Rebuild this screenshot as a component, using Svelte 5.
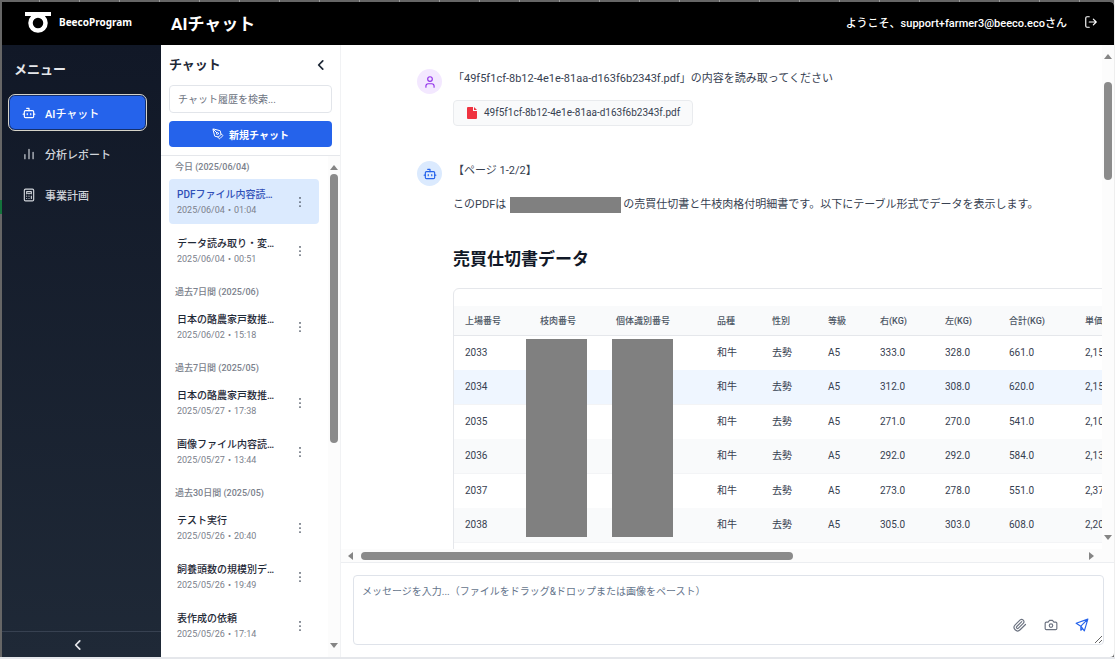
<script lang="ts">
	interface Chat {
		title: string;
		date: string;
		active?: boolean;
	}

	interface Group {
		label: string;
		chats: Chat[];
	}

	const menu = [
		{ label: 'AIチャット', icon: 'bot', active: true },
		{ label: '分析レポート', icon: 'chart', active: false },
		{ label: '事業計画', icon: 'calc', active: false }
	];

	const groups: Group[] = [
		{
			label: '今日 (2025/06/04)',
			chats: [
				{ title: 'PDFファイル内容読…', date: '2025/06/04・01:04', active: true },
				{ title: 'データ読み取り・変…', date: '2025/06/04・00:51' }
			]
		},
		{
			label: '過去7日間 (2025/06)',
			chats: [{ title: '日本の酪農家戸数推…', date: '2025/06/02・15:18' }]
		},
		{
			label: '過去7日間 (2025/05)',
			chats: [
				{ title: '日本の酪農家戸数推…', date: '2025/05/27・17:38' },
				{ title: '画像ファイル内容読…', date: '2025/05/27・13:44' }
			]
		},
		{
			label: '過去30日間 (2025/05)',
			chats: [
				{ title: 'テスト実行', date: '2025/05/26・20:40' },
				{ title: '飼養頭数の規模別デ…', date: '2025/05/26・19:49' },
				{ title: '表作成の依頼', date: '2025/05/26・17:14' }
			]
		}
	];

	const columns = [
		{ label: '上場番号', width: 75 },
		{ label: '枝肉番号', width: 76 },
		{ label: '個体識別番号', width: 101 },
		{ label: '品種', width: 55 },
		{ label: '性別', width: 56 },
		{ label: '等級', width: 52 },
		{ label: '右(KG)', width: 65 },
		{ label: '左(KG)', width: 64 },
		{ label: '合計(KG)', width: 76 },
		{ label: '単価', width: 70 }
	];

	const rows = [
		['2033', '', '', '和牛', '去勢', 'A5', '333.0', '328.0', '661.0', '2,151'],
		['2034', '', '', '和牛', '去勢', 'A5', '312.0', '308.0', '620.0', '2,151'],
		['2035', '', '', '和牛', '去勢', 'A5', '271.0', '270.0', '541.0', '2,100'],
		['2036', '', '', '和牛', '去勢', 'A5', '292.0', '292.0', '584.0', '2,130'],
		['2037', '', '', '和牛', '去勢', 'A5', '273.0', '278.0', '551.0', '2,370'],
		['2038', '', '', '和牛', '去勢', 'A5', '305.0', '303.0', '608.0', '2,200']
	];

	const fileName = '49f5f1cf-8b12-4e1e-81aa-d163f6b2343f.pdf';

	let search = $state('');
	let message = $state('');
</script>

{#snippet icon(name: string, size: number)}
	<svg
		width={size}
		height={size}
		viewBox="0 0 24 24"
		fill="none"
		stroke="currentColor"
		stroke-width="2"
		stroke-linecap="round"
		stroke-linejoin="round"
		aria-hidden="true"
	>
		{#if name === 'bot'}
			<path d="M12 8V4H8" />
			<rect x="4" y="8" width="16" height="12" rx="2" />
			<path d="M2 14h2M20 14h2M15 13v2M9 13v2" />
		{:else if name === 'chart'}
			<path d="M5 20v-7M12 20V4M19 20V9" />
		{:else if name === 'calc'}
			<rect x="4" y="2" width="16" height="20" rx="2" />
			<path d="M8 6h8v3H8zM16 14v4M16 10h.01M12 10h.01M8 10h.01M12 14h.01M8 14h.01M12 18h.01M8 18h.01" />
		{:else if name === 'left'}
			<path d="M15 19l-7-7 7-7" stroke-width="3" />
		{:else if name === 'logout'}
			<path d="M9 3H5a2 2 0 0 0-2 2v14a2 2 0 0 0 2 2h4M16 17l5-5-5-5M21 12H9" />
		{:else if name === 'pen'}
			<path d="M15.7 21.3a1 1 0 0 1-1.4 0l-1.6-1.6a1 1 0 0 1 0-1.4l5.6-5.6a1 1 0 0 1 1.4 0l1.6 1.6a1 1 0 0 1 0 1.4z" />
			<path d="M18 13l-1.4-6.9a1 1 0 0 0-.7-.8L3.2 2a1 1 0 0 0-1.2 1.2l3.3 12.7a1 1 0 0 0 .8.7L13 18M2.3 2.3l7.3 7.3" />
			<circle cx="11" cy="11" r="2" />
		{:else if name === 'user'}
			<path d="M19 21v-2a4 4 0 0 0-4-4H9a4 4 0 0 0-4 4v2" />
			<circle cx="12" cy="7" r="4" />
		{:else if name === 'dots'}
			<path d="M12 5h.01M12 12h.01M12 19h.01" stroke-width="3" />
		{:else if name === 'clip'}
			<path d="M21.4 11.1l-9.2 9.1a6 6 0 0 1-8.5-8.5l8.6-8.5a4 4 0 0 1 5.6 5.6l-8.6 8.6a2 2 0 0 1-2.8-2.9l8.5-8.4" />
		{:else if name === 'camera'}
			<path d="M14.5 4h-5L7 7H4a2 2 0 0 0-2 2v9a2 2 0 0 0 2 2h16a2 2 0 0 0 2-2V9a2 2 0 0 0-2-2h-3z" />
			<circle cx="12" cy="13" r="3" />
		{:else if name === 'send'}
			<path d="M22 2L2 9l8 5 6 8zM22 2L10 14M10 14v7l3-3" />
		{/if}
	</svg>
{/snippet}

{#snippet scrollbar(dir: string, start: number, size: number)}
	<div class="scrollbar {dir}" aria-hidden="true">
		<svg width="10" height="8" viewBox="0 0 10 8"><path d="M1 7l4-5 4 5z" /></svg>
		<div class="track">
			<div style:flex="{start} 0 0px"></div>
			<div class="thumb" style:flex="{size} 0 0px"></div>
			<div style:flex="{100 - start - size} 0 0px"></div>
		</div>
		<svg width="10" height="8" viewBox="0 0 10 8"><path d="M1 1h8L5 6z" /></svg>
	</div>
{/snippet}

<div class="frame">
	<div class="app">
		<header>
			<div class="brand">
				<svg width="28" height="22" viewBox="0 0 28 22" aria-hidden="true">
					<path d="M1 1h26v4H1z" fill="#fff" />
					<circle cx="14" cy="12" r="7.5" fill="none" stroke="#fff" stroke-width="4.500" />
				</svg>
				<span>BeecoProgram</span>
			</div>
			<h1>AIチャット</h1>
			<span class="welcome">ようこそ、support+farmer3@beeco.ecoさん</span>
			<button class="logout" aria-label="ログアウト">{@render icon('logout', 14)}</button>
		</header>

		<div class="body">
			<aside class="sidebar">
				<h2>メニュー</h2>
				<nav>
					{#each menu as item}
						<a href="#{item.icon}" class:active={item.active}>
							{@render icon(item.icon, 14)}
							<span>{item.label}</span>
						</a>
					{/each}
				</nav>
				<button class="collapse" aria-label="メニューを閉じる">{@render icon('left', 14)}</button>
			</aside>

			<section class="history">
				<div class="history-top">
					<div class="title-row">
						<h2>チャット</h2>
						<button aria-label="履歴を閉じる">{@render icon('left', 14)}</button>
					</div>
					<input type="text" bind:value={search} placeholder="チャット履歴を検索..." aria-label="チャット履歴を検索" />
					<button class="new-chat">{@render icon('pen', 12)}新規チャット</button>
				</div>
				<div class="history-list">
					<div class="groups">
						{#each groups as group}
							<div class="group">
								<h3>{group.label}</h3>
								{#each group.chats as chat}
									<div class="chat" class:active={chat.active}>
										<div class="info">
											<div class="name">{chat.title}</div>
											<div class="date">{chat.date}</div>
										</div>
										<button aria-label="操作">{@render icon('dots', 14)}</button>
									</div>
								{/each}
							</div>
						{/each}
					</div>
					{@render scrollbar('vertical', 0, 58)}
				</div>
			</section>

			<main>
				<div class="log-row">
					<div class="log">
						<div class="message">
							<div class="avatar user">{@render icon('user', 14)}</div>
							<div class="content">
								<p>「{fileName}」の内容を読み取ってください</p>
								<a class="file" href="#file">
									<svg width="12" height="14" viewBox="0 0 12 14" aria-hidden="true">
										<path d="M2 1h5v4h4v7a1 1 0 0 1-1 1H2a1 1 0 0 1-1-1V2a1 1 0 0 1 1-1z" fill="#ef3340" />
										<path d="M8 1l3 3H8z" fill="#ef3340" />
									</svg>
									<span>{fileName}</span>
								</a>
							</div>
						</div>

						<div class="message">
							<div class="avatar bot">{@render icon('bot', 14)}</div>
							<div class="content">
								<p>【ページ 1-2/2】</p>
								<p class="intro">このPDFは<span class="redacted"></span>の売買仕切書と牛枝肉格付明細書です。以下にテーブル形式でデータを表示します。</p>
								<h2>売買仕切書データ</h2>
								<div class="table-box">
									<table>
										<colgroup>
											{#each columns as col}
												<col style:width="{col.width}px" />
											{/each}
										</colgroup>
										<thead>
											<tr>
												{#each columns as col}
													<th>{col.label}</th>
												{/each}
											</tr>
										</thead>
										<tbody>
											{#each rows as row, i}
												<tr class:hover={i === 1}>
													{#each row as cell}
														<td>{cell}</td>
													{/each}
												</tr>
											{/each}
										</tbody>
									</table>
									<div class="mask carcass"></div>
									<div class="mask individual"></div>
								</div>
							</div>
						</div>
					</div>
					{@render scrollbar('vertical', 4, 21)}
				</div>
				{@render scrollbar('horizontal', 0, 60)}
				<form class="composer">
					<div class="box">
						<textarea
							bind:value={message}
							placeholder="メッセージを入力...（ファイルをドラッグ&ドロップまたは画像をペースト）"
							aria-label="メッセージ"
						></textarea>
						<div class="actions">
							<button type="button" aria-label="ファイルを添付">{@render icon('clip', 14)}</button>
							<button type="button" aria-label="画像を撮影">{@render icon('camera', 14)}</button>
							<button type="button" class="send" aria-label="送信">{@render icon('send', 14)}</button>
						</div>
					</div>
				</form>
			</main>
		</div>
	</div>
</div>

<style>
	:global(body) { background: #fff; }
	* { box-sizing: border-box; }
	h1, h2, h3, p { margin: 0; }
	svg { display: block; flex: none; }
	button { font: inherit; color: inherit; background: none; border: 0; padding: 0; cursor: pointer; }

	.frame {
		height: 100vh;
		padding: 2px 1px 2px 2px;
		background:
			linear-gradient(#e5e7eb, #e5e7eb) bottom / 100% 2px no-repeat,
			linear-gradient(#eee, #eee) right / 1px 100% no-repeat,
			linear-gradient(#14733c, #14733c) 0 200px / 2px 14px no-repeat,
			repeating-linear-gradient(90deg, #666 0 39px, #999 39px 40px);
		font-family: Roboto, "Noto Sans CJK JP", sans-serif;
		color: #374151;
	}
	.app { height: 100%; display: flex; flex-direction: column; background: #fff; border-radius: 0 4px 4px 0; overflow: hidden; }

	header { flex: none; height: 43px; display: flex; align-items: center; padding: 0 16px 3px 22px; background: #000; color: #fff; }
	.brand { display: flex; align-items: center; gap: 7px; width: 147px; font: 700 10px "Noto Sans", sans-serif; }
	h1 { flex: 1; font-size: 17px; font-weight: 700; }
	.welcome { font-size: 11px; font-weight: 500; }
	.logout { margin-left: 17px; }

	.body { flex: 1; min-height: 0; display: flex; }

	.sidebar { flex: none; width: 159px; display: flex; flex-direction: column; background: linear-gradient(#111827, #1f2937); color: #e5e7eb; }
	.sidebar h2 { padding: 15px 12px 0; font-size: 13px; line-height: 20px; }
	nav { flex: 1; display: flex; flex-direction: column; gap: 6px; padding: 15px 15px 0 7px; }
	nav a { display: flex; align-items: center; gap: 9px; height: 35px; padding: 0 13px; border-radius: 6px; color: #d1d5db; font-size: 11px; font-weight: 500; text-decoration: none; }
	nav a.active { background: #2563eb; color: #fff; outline: 1px solid #d6d3c8; box-shadow: inset 0 0 0 1px #14306e; }
	.collapse { height: 26px; display: flex; align-items: center; justify-content: center; border-top: 1px solid #374151; padding-right: 8px; }

	.history { flex: none; width: 180px; display: flex; flex-direction: column; border-right: 1px solid #f1f2f4; }
	.history-top { padding: 10px 8px 8px; border-bottom: 1px solid #e5e7eb; }
	.title-row { display: flex; align-items: center; justify-content: space-between; padding-right: 4px; color: #1f2937; }
	.title-row h2 { font-size: 13px; line-height: 20px; }
	.history input { display: block; width: 100%; height: 28px; margin: 10px 0 8px; padding: 0 8px; border: 1px solid #e2e5ea; border-radius: 4px; font: 10px Roboto, "Noto Sans CJK JP", sans-serif; }
	input::placeholder { color: #6b7280; }
	.new-chat { width: 100%; height: 26px; display: flex; align-items: center; justify-content: center; gap: 5px; border-radius: 4px; background: #2563eb; color: #fff; font-size: 10px; font-weight: 700; }

	.history-list { flex: 1; min-height: 0; display: flex; }
	.groups { flex: 1; min-width: 0; overflow: hidden; padding: 4px 9px 0 8px; }
	.group { display: flex; flex-direction: column; gap: 4px; margin-bottom: 12px; }
	.group h3 { padding-left: 6px; margin-bottom: 1px; font-size: 9px; line-height: 14px; font-weight: 500; color: #7b818c; }
	.chat { height: 45px; display: flex; align-items: center; padding: 0 12px 0 8px; border-radius: 4px; }
	.chat.active { background: #dbeafe; }
	.chat button { color: #4b5563; }
	.info { flex: 1; min-width: 0; }
	.name { font-size: 10px; line-height: 16px; font-weight: 500; color: #1f2937; white-space: nowrap; }
	.chat.active .name { color: #3150b8; }
	.date { font-size: 9px; line-height: 14px; color: #7b818c; }

	main { flex: 1; min-width: 0; display: flex; flex-direction: column; }
	.log-row { flex: 1; min-height: 0; display: flex; }
	.log { flex: 1; min-width: 0; overflow: hidden; padding: 24px 0 0 76px; font-size: 11px; line-height: 20px; }
	.message { display: flex; gap: 11px; margin-bottom: 35px; }
	.avatar { flex: none; width: 25px; height: 25px; display: flex; align-items: center; justify-content: center; border-radius: 50%; }
	.avatar.user { background: #f3e8ff; color: #9333ea; }
	.avatar.bot { background: #dbeafe; color: #2563eb; }
	.content { flex: none; }
	.file { display: flex; width: max-content; align-items: center; gap: 6px; height: 26px; margin-top: 11px; padding: 0 12px; border: 1px solid #e9ebee; border-radius: 4px; background: #f9fafb; color: #374151; font-size: 10px; text-decoration: none; }
	.intro { margin-top: 14px; }
	.redacted { display: inline-block; width: 111px; height: 16px; margin: 0 2px 0 4px; background: #808080; vertical-align: middle; }
	.content h2 { margin: 32px 0 17px; font-size: 17px; line-height: 24px; color: #111827; }

	.table-box { position: relative; padding: 17px 0; border: 1px solid #e5e7eb; border-radius: 6px; overflow: hidden; }
	table { table-layout: fixed; width: 690px; border-collapse: separate; border-spacing: 0; }
	th, td { padding: 0 0 0 11px; text-align: left; white-space: nowrap; }
	th { height: 30px; background: #f9fafb; border-bottom: 1px solid #e5e7eb; font-size: 9px; font-weight: 500; color: #4b5563; }
	td { height: 34px; font-size: 10px; }
	tr:nth-child(even) td { height: 35px; background: #f9fafb; border-bottom: 1px solid #f3f4f6; }
	tr.hover:nth-child(even) td { background: #eff6ff; }
	.mask { position: absolute; top: 50px; height: 198px; width: 61px; background: #808080; }
	.carcass { left: 72px; }
	.individual { left: 158px; }

	.scrollbar { flex: none; display: flex; align-items: center; background: #fcfcfc; }
	.scrollbar svg { fill: #858585; }
	.vertical { flex-direction: column; width: 12px; padding: 7px 0; }
	.horizontal { height: 14px; padding: 0 17px 0 4px; border-bottom: 1px solid #eceef1; }
	.horizontal svg { transform: rotate(-90deg); }
	.track { flex: 1; display: flex; }
	.vertical .track { flex-direction: column; width: 8px; margin: 3px 0 4px; }
	.horizontal .track { height: 8px; margin: 0 6px; }
	.thumb { background: #8b8b8b; border-radius: 4px; }

	.composer { flex: none; padding: 12px 10px 12px 12px; }
	.box { position: relative; }
	textarea { display: block; width: 100%; height: 70px; padding: 8px; border: 1px solid #dfe3ea; border-radius: 4px; font: 10px/16px Roboto, "Noto Sans CJK JP", sans-serif; resize: vertical; }
	textarea::placeholder { color: #64748b; }
	.actions { position: absolute; right: 15px; bottom: 13px; display: flex; gap: 17px; color: #6b7280; }
	.actions .send { color: #2563eb; }
</style>
